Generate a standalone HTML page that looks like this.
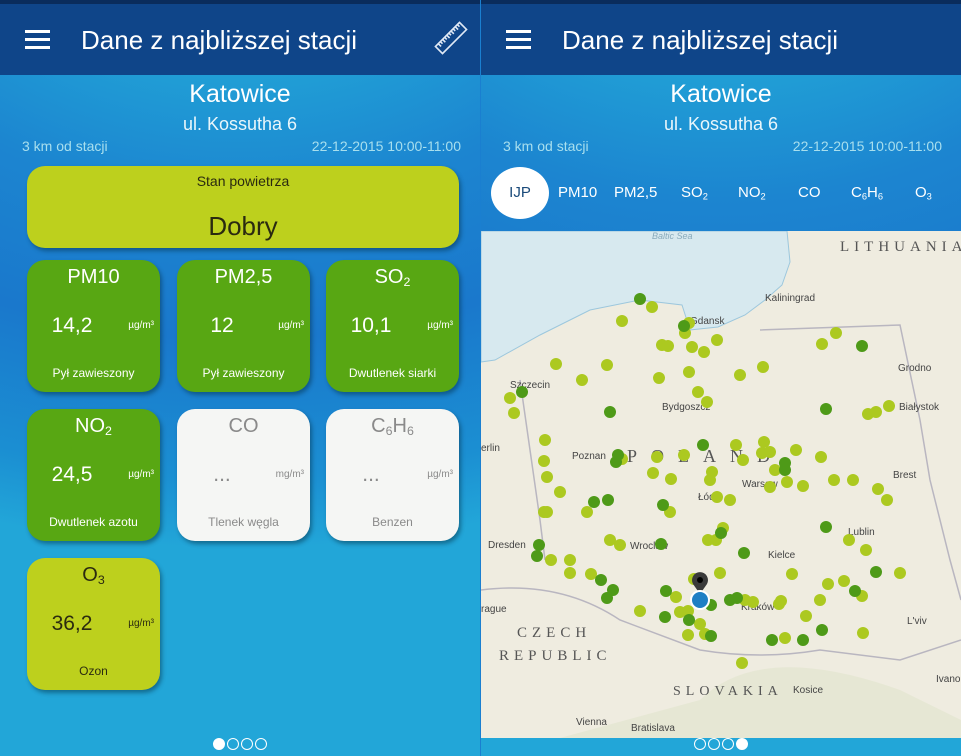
<!DOCTYPE html>
<html><head><meta charset="utf-8"><style>
*{margin:0;padding:0;box-sizing:border-box}
body{width:961px;height:756px;overflow:hidden;font-family:"Liberation Sans","DejaVu Sans",sans-serif;background:#1a7fd0;position:relative}
.panel{position:absolute;top:0;width:480px;height:756px;overflow:hidden;
background:radial-gradient(ellipse 900px 700px at 50% -20%,#2bc6d6 0%,#22a9d8 25%,#1c85d0 50%,#1a78cc 70%,#1b8fd2 90%,#22a6d8 100%)}
.hdr{position:absolute;left:0;top:0;width:100%;height:75px;background:#0f4589;box-shadow:inset 0 4px 0 #0a2c5c}
.ham{position:absolute;left:25px;top:30px;width:25px;height:18px}
.ham i{display:block;height:3px;background:#fff;margin-bottom:5px}
.title{position:absolute;left:81px;top:25px;color:#fff;font-size:26px}
.city{position:absolute;width:100%;text-align:center;top:80px;color:#fff;font-size:25px}
.street{position:absolute;width:100%;text-align:center;top:114px;color:#e9f6fb;font-size:18px}
.km{position:absolute;left:22px;top:138px;color:#a8dfee;font-size:14px}
.dt{position:absolute;right:19px;top:138px;color:#a8dfee;font-size:14px}
.big{position:absolute;left:27px;top:166px;width:432px;height:82px;background:#bdd01d;border-radius:18px;box-shadow:2px 3px 4px rgba(0,40,60,.45);text-align:center;color:#2a2a10}
.tile{position:absolute;width:133px;height:132px;border-radius:18px;box-shadow:2px 3px 4px rgba(0,40,60,.45);color:#fff;text-align:center}
.g{background:#58a713}.w{background:#f5f6f4;color:#8a8a8a}.y{background:#bdd01d;color:#2b2b10}
.tile .n{position:absolute;top:6px;width:100%;font-size:20px}
.tile .v{position:absolute;top:54px;left:0;width:90px;font-size:21px}
.tile .u{position:absolute;top:60px;right:6px;font-size:10px}
.tile .d{position:absolute;top:106px;width:100%;font-size:12px}
sub{font-size:.62em;vertical-align:-0.25em}
.pg{position:absolute;bottom:1px;left:0;width:100%;text-align:center}
.pg span{display:inline-block;width:12px;height:12px;border:1.5px solid #fff;border-radius:50%;margin:0 1px}
.pg span.on{background:#fff}
.tabs{position:absolute;top:167px;left:0;width:100%;height:52px;color:#fff;font-size:15px}
.tabs .t{position:absolute;top:17px}
.ijp{position:absolute;left:10px;top:0;width:58px;height:52px;border-radius:50%;background:#fff;color:#1a4a7a;text-align:center;line-height:52px}
</style></head><body>

<div class="panel" style="left:0">
 <div class="hdr"><div class="ham"><i></i><i></i><i></i></div><div class="title">Dane z najbliższej stacji</div>
  <svg style="position:absolute;left:432px;top:19px" width="38" height="38" viewBox="0 0 38 38"><g transform="rotate(-45 19 19)" fill="none" stroke="#dfe8f5" stroke-width="1.6"><rect x="2" y="14" width="34" height="10"/><path d="M6 14v4M9 14v3M12 14v4M15 14v3M18 14v4M21 14v3M24 14v4M27 14v3M30 14v4M33 14v3"/></g></svg>
 </div>
 <div class="city">Katowice</div><div class="street">ul. Kossutha 6</div>
 <div class="km">3 km od stacji</div><div class="dt">22-12-2015 10:00-11:00</div>
 <div class="big"><div style="position:absolute;top:7px;width:100%;font-size:14px">Stan powietrza</div><div style="position:absolute;top:45px;width:100%;font-size:26px">Dobry</div></div>
 <div class="tile g" style="left:27px;top:260px"><div class="n">PM10</div><div class="v">14,2</div><div class="u">µg/m³</div><div class="d">Pył zawieszony</div></div>
 <div class="tile g" style="left:177px;top:260px"><div class="n">PM2,5</div><div class="v">12</div><div class="u">µg/m³</div><div class="d">Pył zawieszony</div></div>
 <div class="tile g" style="left:326px;top:260px"><div class="n">SO<sub>2</sub></div><div class="v">10,1</div><div class="u">µg/m³</div><div class="d">Dwutlenek siarki</div></div>
 <div class="tile g" style="left:27px;top:409px"><div class="n">NO<sub>2</sub></div><div class="v">24,5</div><div class="u">µg/m³</div><div class="d">Dwutlenek azotu</div></div>
 <div class="tile w" style="left:177px;top:409px"><div class="n">CO</div><div class="v">...</div><div class="u">mg/m³</div><div class="d">Tlenek węgla</div></div>
 <div class="tile w" style="left:326px;top:409px"><div class="n">C<sub>6</sub>H<sub>6</sub></div><div class="v">...</div><div class="u">µg/m³</div><div class="d">Benzen</div></div>
 <div class="tile y" style="left:27px;top:558px"><div class="n">O<sub>3</sub></div><div class="v">36,2</div><div class="u">µg/m³</div><div class="d">Ozon</div></div>
 <div class="pg"><span class="on"></span><span></span><span></span><span></span></div>
</div>

<div class="panel" style="left:481px">
 <div class="hdr"><div class="ham"><i></i><i></i><i></i></div><div class="title">Dane z najbliższej stacji</div></div>
 <div class="city">Katowice</div><div class="street">ul. Kossutha 6</div>
 <div class="km">3 km od stacji</div><div class="dt">22-12-2015 10:00-11:00</div>
 <div class="tabs"><div class="ijp">IJP</div><div class="t" style="left:77px">PM10</div><div class="t" style="left:133px">PM2,5</div><div class="t" style="left:200px">SO<sub>2</sub></div><div class="t" style="left:257px">NO<sub>2</sub></div><div class="t" style="left:317px">CO</div><div class="t" style="left:370px">C<sub>6</sub>H<sub>6</sub></div><div class="t" style="left:434px">O<sub>3</sub></div></div>
 <div class="pg"><span></span><span></span><span></span><span class="on"></span></div>
</div>

<svg style="position:absolute;left:481px;top:231px" width="480" height="507" viewBox="481 231 480 507" font-family="Liberation Sans,sans-serif">
<rect x="481" y="231" width="480" height="507" fill="#efece0"/>
<path d="M481 231H787L790 262L782 285L765 300L745 315L718 327L690 330L682 305L640 300L590 310L540 335L495 360L481 362Z" fill="#d7e9ef" stroke="#9cc7dd"/>
<path d="M700 700 Q760 640 900 690 L961 720 V738 H560 Z" fill="#e3e6cf" opacity=".7"/>
<path d="M481 590 Q560 580 620 620 L700 650 Q760 660 820 650 L900 660 L961 640" fill="none" stroke="#b9b6c0" stroke-width="1.5"/>
<path d="M760 330 L900 325 L920 420 L930 480 L950 560 L961 600" fill="none" stroke="#b9b6c0" stroke-width="1.5"/>
<path d="M520 380 L530 450 L540 520 L545 560" fill="none" stroke="#b9b6c0" stroke-width="1.5"/>
<g fill="#444" font-size="10"><text x="652" y="239" font-style="italic" fill="#8ab" font-size="9">Baltic Sea</text>
<text x="765" y="301">Kaliningrad</text><text x="690" y="324">Gdansk</text><text x="510" y="388">Szczecin</text><text x="662" y="410">Bydgoszcz</text><text x="899" y="410">Białystok</text><text x="572" y="459">Poznan</text><text x="481" y="451">erlin</text><text x="742" y="487">Warsaw</text><text x="698" y="500">Łódź</text><text x="893" y="478">Brest</text><text x="848" y="535">Lublin</text><text x="630" y="549">Wroclaw</text><text x="768" y="558">Kielce</text><text x="488" y="548">Dresden</text><text x="741" y="610">Kraków</text><text x="481" y="612">rague</text><text x="907" y="624">L'viv</text><text x="793" y="693">Kosice</text><text x="576" y="725">Vienna</text><text x="631" y="731">Bratislava</text><text x="898" y="371">Grodno</text><text x="936" y="682">Ivano</text></g>
<g fill="#555" font-family="Liberation Serif,serif" font-size="15" letter-spacing="5"><text x="840" y="251">LITHUANIA</text><text x="627" y="462" font-size="18" letter-spacing="14">POLAND</text><text x="517" y="637">CZECH</text><text x="499" y="660">REPUBLIC</text><text x="673" y="695" font-size="14">SLOVAKIA</text></g>
<g fill="#acc920">
<circle cx="622" cy="321" r="6"/><circle cx="652" cy="307" r="6"/><circle cx="662" cy="345" r="6"/><circle cx="668" cy="346" r="6"/><circle cx="689" cy="323" r="6"/><circle cx="685" cy="333" r="6"/><circle cx="692" cy="347" r="6"/><circle cx="704" cy="352" r="6"/><circle cx="717" cy="340" r="6"/><circle cx="659" cy="378" r="6"/><circle cx="607" cy="365" r="6"/><circle cx="582" cy="380" r="6"/><circle cx="556" cy="364" r="6"/><circle cx="514" cy="413" r="6"/><circle cx="545" cy="440" r="6"/><circle cx="544" cy="461" r="6"/><circle cx="547" cy="477" r="6"/><circle cx="560" cy="492" r="6"/><circle cx="544" cy="512" r="6"/><circle cx="587" cy="512" r="6"/><circle cx="610" cy="540" r="6"/><circle cx="657" cy="457" r="6"/><circle cx="622" cy="459" r="6"/><circle cx="653" cy="473" r="6"/><circle cx="671" cy="479" r="6"/><circle cx="670" cy="512" r="6"/><circle cx="710" cy="480" r="6"/><circle cx="717" cy="497" r="6"/><circle cx="723" cy="528" r="6"/><circle cx="716" cy="540" r="6"/><circle cx="730" cy="500" r="6"/><circle cx="743" cy="460" r="6"/><circle cx="762" cy="453" r="6"/><circle cx="787" cy="482" r="6"/><circle cx="770" cy="487" r="6"/><circle cx="775" cy="470" r="6"/><circle cx="821" cy="457" r="6"/><circle cx="834" cy="480" r="6"/><circle cx="853" cy="480" r="6"/><circle cx="887" cy="500" r="6"/><circle cx="878" cy="489" r="6"/><circle cx="770" cy="452" r="6"/><circle cx="868" cy="414" r="6"/><circle cx="876" cy="412" r="6"/><circle cx="889" cy="406" r="6"/><circle cx="551" cy="560" r="6"/><circle cx="570" cy="560" r="6"/><circle cx="570" cy="573" r="6"/><circle cx="591" cy="574" r="6"/><circle cx="620" cy="545" r="6"/><circle cx="694" cy="579" r="6"/><circle cx="720" cy="573" r="6"/><circle cx="680" cy="612" r="6"/><circle cx="688" cy="635" r="6"/><circle cx="705" cy="634" r="6"/><circle cx="745" cy="600" r="6"/><circle cx="753" cy="602" r="6"/><circle cx="779" cy="604" r="6"/><circle cx="806" cy="616" r="6"/><circle cx="820" cy="600" r="6"/><circle cx="785" cy="638" r="6"/><circle cx="792" cy="574" r="6"/><circle cx="828" cy="584" r="6"/><circle cx="862" cy="596" r="6"/><circle cx="844" cy="581" r="6"/><circle cx="863" cy="633" r="6"/><circle cx="900" cy="573" r="6"/><circle cx="866" cy="550" r="6"/><circle cx="796" cy="450" r="6"/><circle cx="849" cy="540" r="6"/><circle cx="764" cy="442" r="6"/><circle cx="803" cy="486" r="6"/><circle cx="736" cy="445" r="6"/><circle cx="689" cy="372" r="6"/><circle cx="740" cy="375" r="6"/><circle cx="763" cy="367" r="6"/><circle cx="822" cy="344" r="6"/><circle cx="836" cy="333" r="6"/><circle cx="742" cy="663" r="6"/><circle cx="708" cy="540" r="6"/><circle cx="676" cy="597" r="6"/><circle cx="640" cy="611" r="6"/><circle cx="781" cy="601" r="6"/><circle cx="712" cy="472" r="6"/><circle cx="698" cy="392" r="6"/><circle cx="707" cy="402" r="6"/><circle cx="684" cy="455" r="6"/><circle cx="510" cy="398" r="6"/><circle cx="547" cy="512" r="6"/><circle cx="700" cy="624" r="6"/><circle cx="688" cy="611" r="6"/>
</g>
<g fill="#4e9a18">
<circle cx="640" cy="299" r="6"/><circle cx="684" cy="326" r="6"/><circle cx="522" cy="392" r="6"/><circle cx="610" cy="412" r="6"/><circle cx="862" cy="346" r="6"/><circle cx="826" cy="409" r="6"/><circle cx="616" cy="462" r="6"/><circle cx="594" cy="502" r="6"/><circle cx="663" cy="505" r="6"/><circle cx="826" cy="527" r="6"/><circle cx="721" cy="533" r="6"/><circle cx="744" cy="553" r="6"/><circle cx="661" cy="544" r="6"/><circle cx="539" cy="545" r="6"/><circle cx="537" cy="556" r="6"/><circle cx="601" cy="580" r="6"/><circle cx="607" cy="598" r="6"/><circle cx="613" cy="590" r="6"/><circle cx="666" cy="591" r="6"/><circle cx="665" cy="617" r="6"/><circle cx="689" cy="620" r="6"/><circle cx="711" cy="605" r="6"/><circle cx="730" cy="600" r="6"/><circle cx="711" cy="636" r="6"/><circle cx="772" cy="640" r="6"/><circle cx="803" cy="640" r="6"/><circle cx="822" cy="630" r="6"/><circle cx="876" cy="572" r="6"/><circle cx="855" cy="591" r="6"/><circle cx="785" cy="470" r="6"/><circle cx="703" cy="445" r="6"/><circle cx="608" cy="500" r="6"/><circle cx="737" cy="598" r="6"/><circle cx="618" cy="455" r="6"/><circle cx="785" cy="463" r="6"/>
</g>
<path d="M700 594 L693 584 A8 8 0 1 1 707 584 Z" fill="#3a3a3a"/><circle cx="700" cy="580" r="3" fill="#000"/>
<circle cx="700" cy="600" r="9" fill="#1f7fc4" stroke="#fff" stroke-width="2"/>
</svg>
</body></html>
